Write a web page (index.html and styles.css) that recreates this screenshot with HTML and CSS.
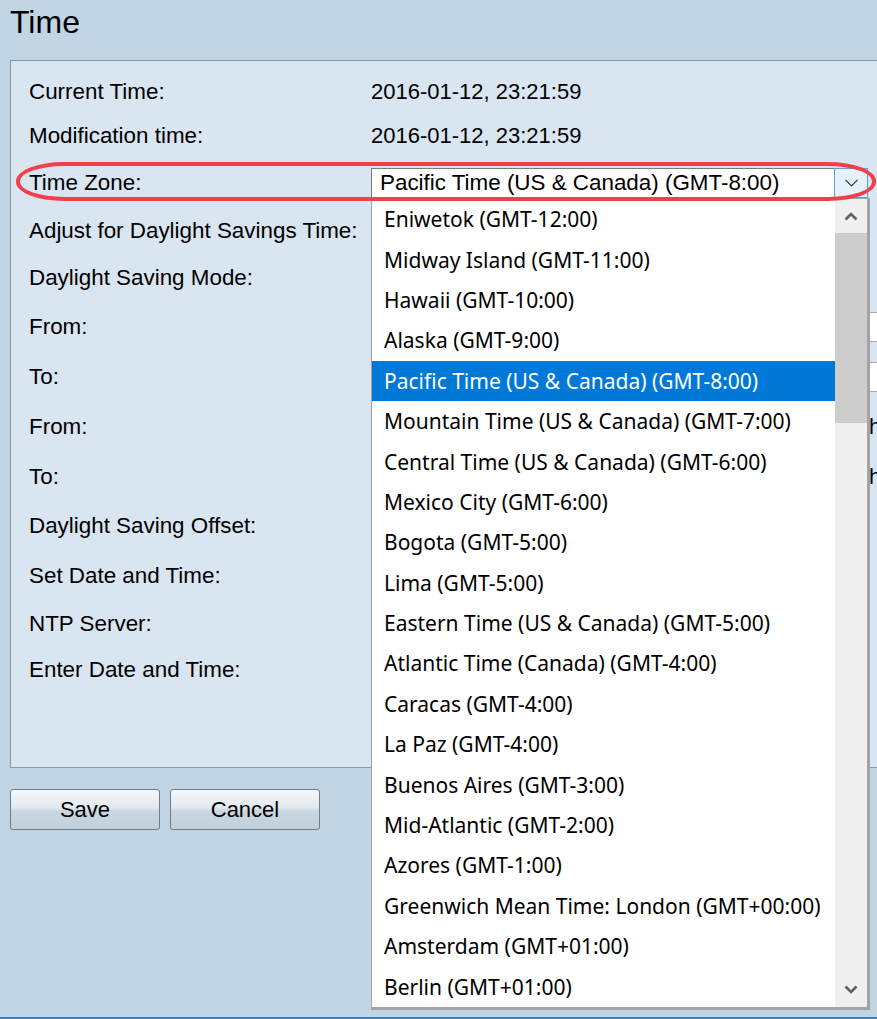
FILE: index.html
```html
<!DOCTYPE html>
<html lang="en">
<head>
<meta charset="utf-8">
<title>Time</title>
<link rel="stylesheet" href="styles.css">
</head>
<body>
<div class="page">
  <h1 class="title">Time</h1>
  <div class="panel">
    <div class="form">
      <div class="label">Current Time:</div>
      <div class="value">2016-01-12, 23:21:59</div>

      <div class="label">Modification time:</div>
      <div class="value">2016-01-12, 23:21:59</div>

      <div class="label">Time Zone:</div>
      <div class="value">
        <div class="select-wrap">
          <div class="select">
            <span class="select-text">Pacific Time (US &amp; Canada) (GMT-8:00)</span>
            <span class="select-arrow">
              <svg width="13" height="8" viewBox="0 0 13 8"><polyline points="0.5,0.8 6.5,6.8 12.5,0.8" fill="none" stroke="#333" stroke-width="1.2"/></svg>
            </span>
          </div>
          <div class="dropdown">
            <ul class="options">
              <li class="option">Eniwetok (GMT-12:00)</li>
              <li class="option">Midway Island (GMT-11:00)</li>
              <li class="option">Hawaii (GMT-10:00)</li>
              <li class="option">Alaska (GMT-9:00)</li>
              <li class="option selected">Pacific Time (US &amp; Canada) (GMT-8:00)</li>
              <li class="option">Mountain Time (US &amp; Canada) (GMT-7:00)</li>
              <li class="option">Central Time (US &amp; Canada) (GMT-6:00)</li>
              <li class="option">Mexico City (GMT-6:00)</li>
              <li class="option">Bogota (GMT-5:00)</li>
              <li class="option">Lima (GMT-5:00)</li>
              <li class="option">Eastern Time (US &amp; Canada) (GMT-5:00)</li>
              <li class="option">Atlantic Time (Canada) (GMT-4:00)</li>
              <li class="option">Caracas (GMT-4:00)</li>
              <li class="option">La Paz (GMT-4:00)</li>
              <li class="option">Buenos Aires (GMT-3:00)</li>
              <li class="option">Mid-Atlantic (GMT-2:00)</li>
              <li class="option">Azores (GMT-1:00)</li>
              <li class="option">Greenwich Mean Time: London (GMT+00:00)</li>
              <li class="option">Amsterdam (GMT+01:00)</li>
              <li class="option">Berlin (GMT+01:00)</li>
            </ul>
            <div class="scrollbar">
              <div class="scroll-btn">
                <svg width="14" height="9" viewBox="0 0 14 9"><polyline points="1.5,7.5 7,2 12.5,7.5" fill="none" stroke="#606060" stroke-width="2.6"/></svg>
              </div>
              <div class="scroll-track"><div class="scroll-thumb"></div></div>
              <div class="scroll-btn">
                <svg width="14" height="9" viewBox="0 0 14 9"><polyline points="1.5,1.5 7,7 12.5,1.5" fill="none" stroke="#606060" stroke-width="2.6"/></svg>
              </div>
            </div>
          </div>
        </div>
      </div>

      <div class="label">Adjust for Daylight Savings Time:</div>
      <div class="value"></div>

      <div class="label">Daylight Saving Mode:</div>
      <div class="value"></div>

      <div class="label">From:</div>
      <div class="value"><span class="hidden-field"></span></div>

      <div class="label">To:</div>
      <div class="value"><span class="hidden-field"></span></div>

      <div class="label">From:</div>
      <div class="value"><span class="hidden-text">h</span></div>

      <div class="label">To:</div>
      <div class="value"><span class="hidden-text">h</span></div>

      <div class="label">Daylight Saving Offset:</div>
      <div class="value"></div>

      <div class="label">Set Date and Time:</div>
      <div class="value"></div>

      <div class="label">NTP Server:</div>
      <div class="value"></div>

      <div class="label">Enter Date and Time:</div>
      <div class="value"></div>
    </div>
    <div class="highlight-oval"></div>
  </div>
  <div class="buttons">
    <button class="btn" type="button">Save</button>
    <button class="btn" type="button">Cancel</button>
  </div>
</div>
<div class="bottom-line"></div>
</body>
</html>
```
FILE: styles.css
```css
html, body {
  margin: 0;
  padding: 0;
}

body {
  background: #c1d4e4;
  font-family: "Liberation Sans", Arial, sans-serif;
  color: #000;
  min-height: 100vh;
  display: flex;
  flex-direction: column;
  overflow: hidden;
}

.page {
  flex: 0 0 auto;
}

.title {
  margin: 0 0 20px 0;
  padding: 4px 0 0 10px;
  height: 36px;
  font-size: 32px;
  line-height: 36px;
  font-weight: normal;
}

.panel {
  position: relative;
  margin-left: 10px;
  width: 1000px;
  border: 1px solid #8899ac;
  background: #d9e5f1;
}

.form {
  display: grid;
  grid-template-columns: 342px 1fr;
  grid-template-rows: 42px 46px 48px 48px 46px 52px 48px 52px 48px 50px 50px 46px 46px;
  padding: 10px 0 74px 18px;
  font-size: 22px;
}

.label, .value {
  display: flex;
  align-items: center;
  white-space: nowrap;
}

.label {
  font-size: 22.4px;
}

.select-wrap {
  position: relative;
}

.select {
  display: flex;
  width: 497px;
  height: 30px;
  box-sizing: border-box;
  border: 1px solid #7a7a7a;
  background: #fff;
}

.select-text {
  flex: 1;
  padding-left: 8px;
  font-size: 22.4px;
  line-height: 28px;
}

.select-arrow {
  width: 32px;
  margin: -1px -1px -1px 0;
  border: 1px solid #5b9fe3;
  background: #e5f1fb;
  display: flex;
  align-items: center;
  justify-content: center;
}

.dropdown {
  position: absolute;
  left: 0;
  top: 30px;
  z-index: 5;
  display: flex;
  width: 499px;
  box-sizing: border-box;
  border-left: 1px solid #a3a3a3;
  border-top: 1px solid #a3a3a3;
  border-right: 3px solid #a3a3a3;
  border-bottom: 3px solid #a3a3a3;
  background: #fff;
}

.options {
  list-style: none;
  margin: 0;
  padding: 0;
  flex: 1;
  font-family: "Noto Sans", "Open Sans", sans-serif;
  font-size: 21px;
  color: #000;
}

.option {
  height: 40.4px;
  display: flex;
  align-items: center;
  padding-left: 12px;
  white-space: nowrap;
}

.option.selected {
  background: #0078d7;
  color: #fff;
}

.scrollbar {
  width: 32px;
  display: flex;
  flex-direction: column;
  background: #f0f0f0;
}

.scroll-btn {
  height: 34px;
  display: flex;
  align-items: center;
  justify-content: center;
}

.scroll-track {
  flex: 1;
}

.scroll-thumb {
  height: 190px;
  background: #cdcdcd;
}

.hidden-field {
  display: block;
  margin-left: 498px;
  width: 140px;
  height: 30px;
  box-sizing: border-box;
  border: 1px solid #a9a9a9;
  background: #fff;
}

.hidden-text {
  margin-left: 498px;
}

.highlight-oval {
  position: absolute;
  left: 5px;
  top: 101px;
  width: 860px;
  height: 39px;
  box-sizing: border-box;
  border: 4px solid #f53f48;
  border-radius: 48px / 19px;
  z-index: 10;
  pointer-events: none;
}

.buttons {
  display: flex;
  gap: 10px;
  margin: 21px 0 0 10px;
}

.btn {
  width: 150px;
  height: 41px;
  border: 1px solid #6f7c89;
  border-radius: 3px;
  background: linear-gradient(to bottom, #f5f7f9 0%, #e3e9ef 45%, #c9d5e0 55%, #c3cfdb 100%);
  font-family: "Liberation Sans", Arial, sans-serif;
  font-size: 22px;
  color: #000;
  padding: 0;
}

.bottom-line {
  margin-top: auto;
  height: 2px;
  background: #3d7ebf;
}
```
